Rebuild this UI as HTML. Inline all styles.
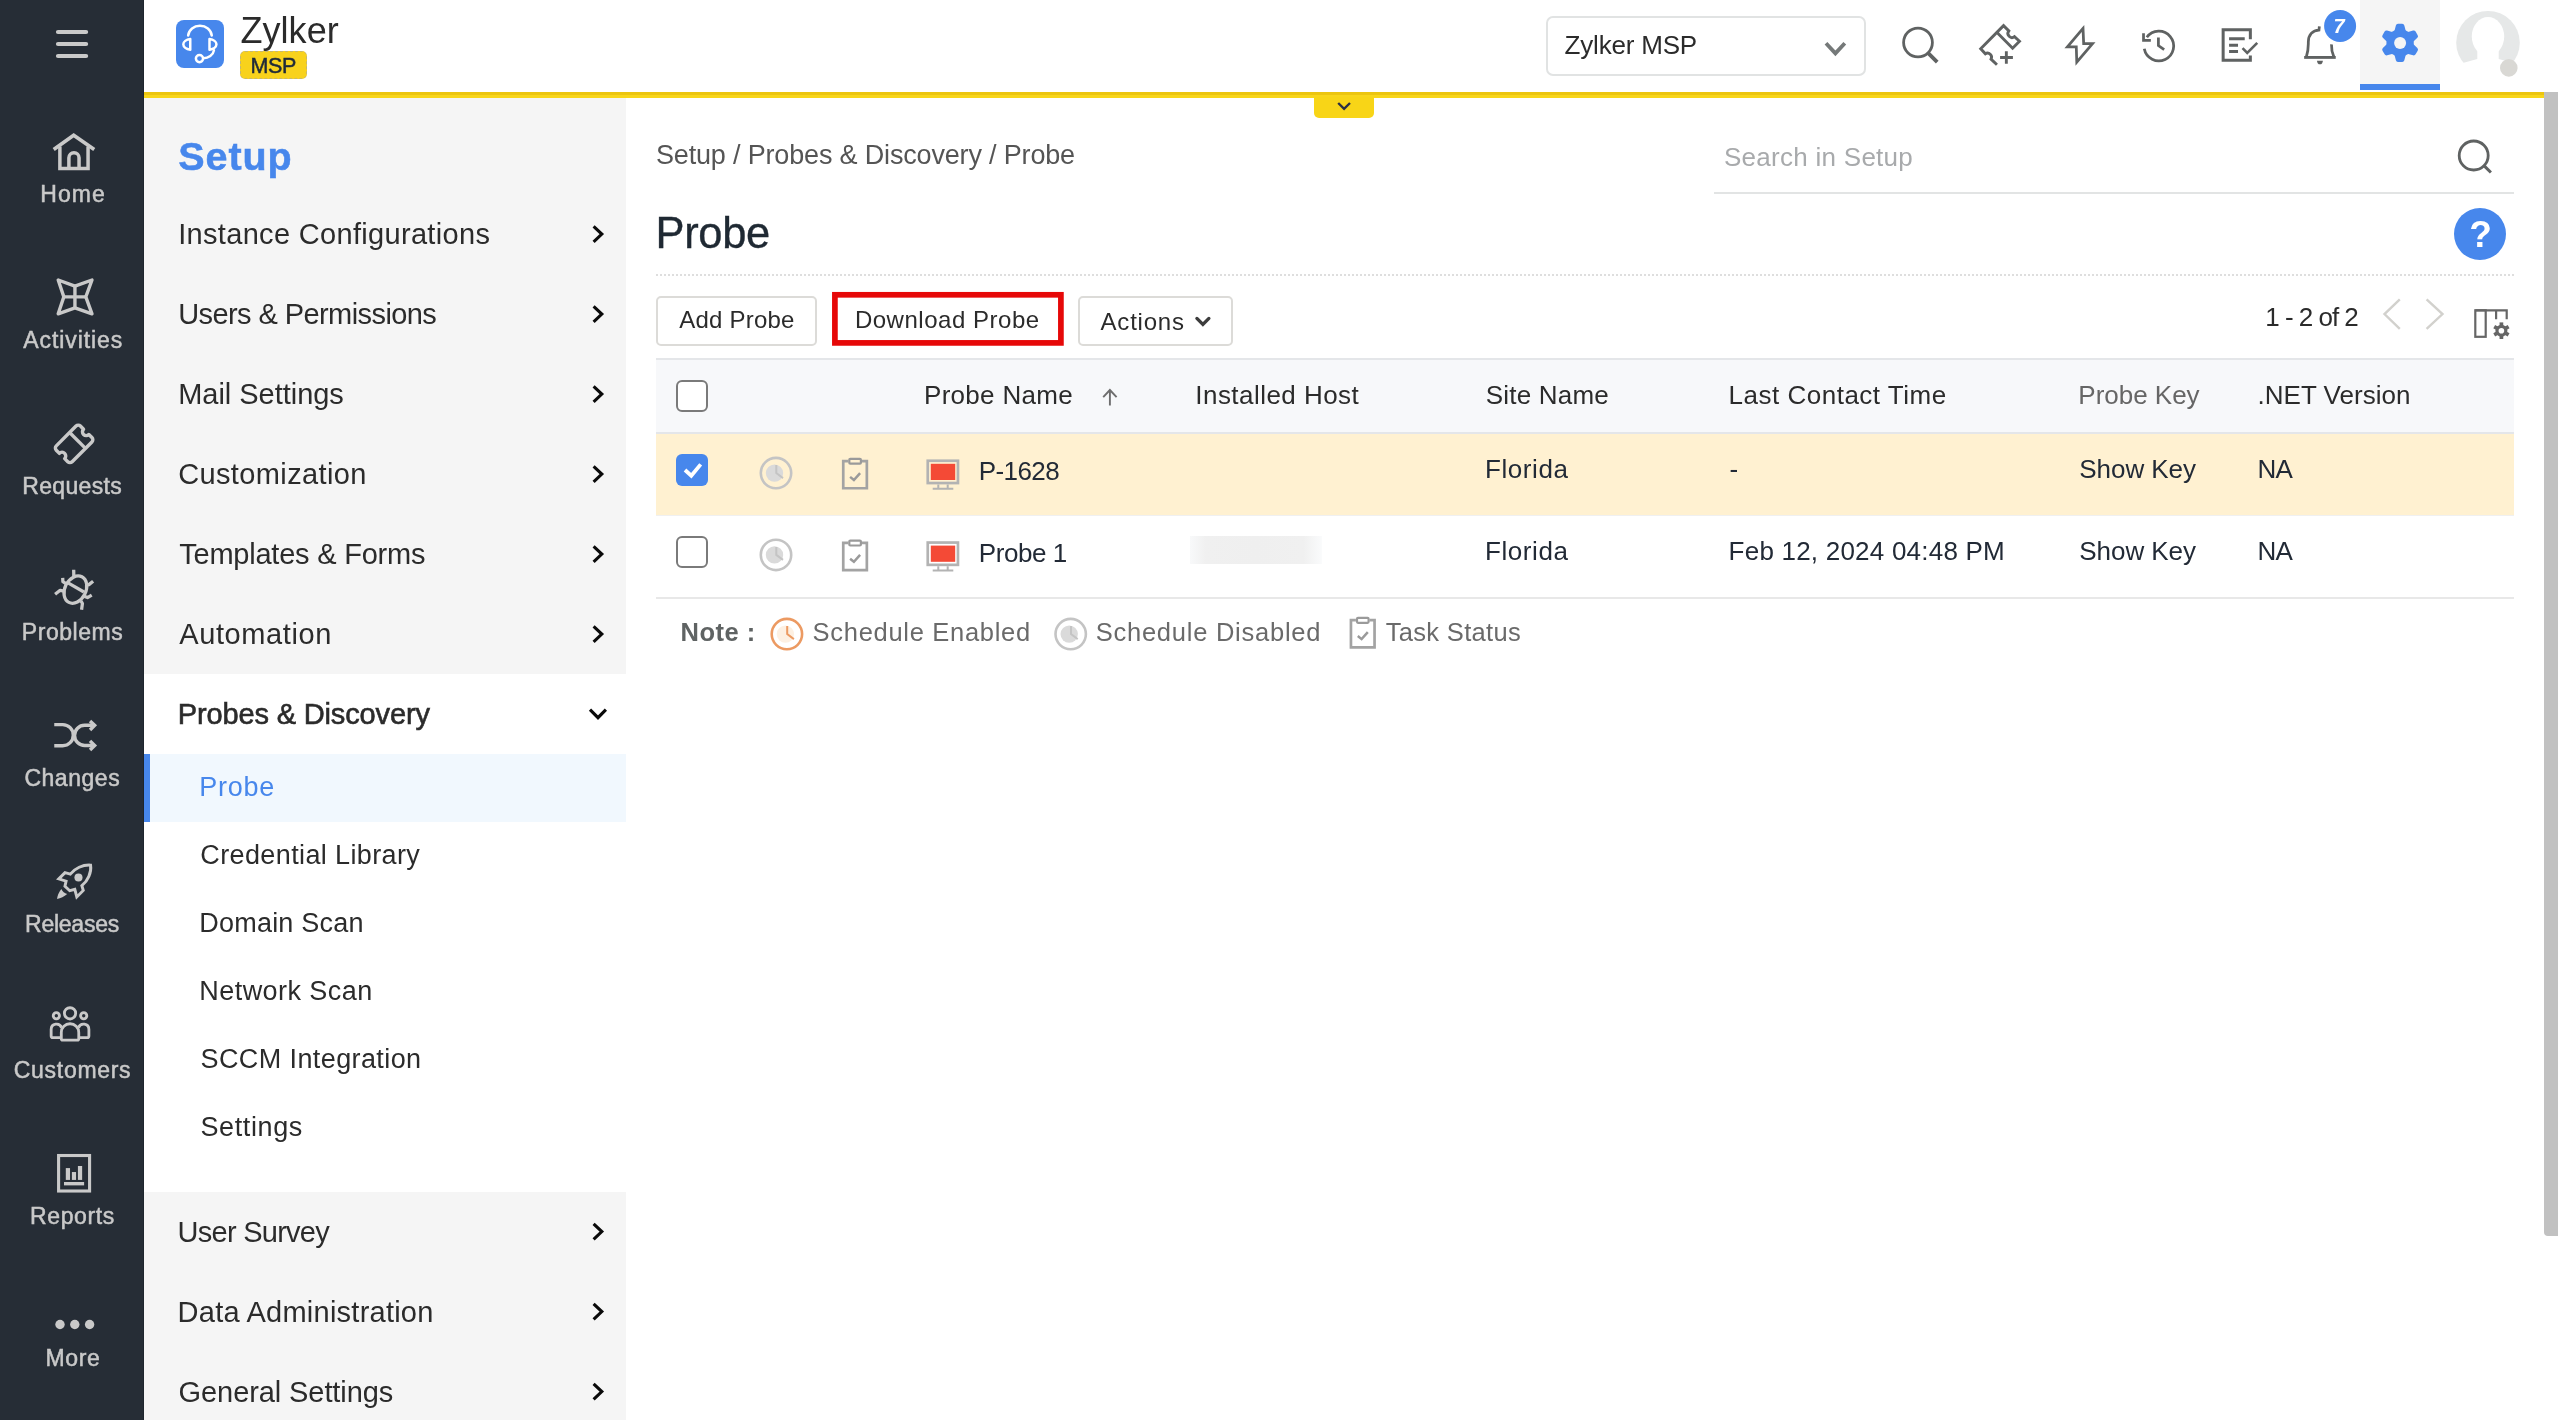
<!DOCTYPE html>
<html lang="en">
<head>
<meta charset="utf-8">
<title>Probe - Setup</title>
<style>
html,body{margin:0;padding:0;}
body{width:2558px;height:1420px;overflow:hidden;position:relative;background:#ffffff;font-family:"Liberation Sans",sans-serif;}
div,span{box-sizing:border-box;}
.abs{position:absolute;}
.t{position:absolute;white-space:pre;line-height:1;font-family:"Liberation Sans",sans-serif;}
#nav{position:absolute;left:0;top:0;width:144px;height:1420px;background:#262d36;border-right:1px solid #1e252d;}
#header{position:absolute;left:144px;top:0;width:2414px;height:92px;background:#ffffff;}
#ybar{position:absolute;left:144px;top:92px;width:2400px;height:6px;background:linear-gradient(#ecc510 0,#ecc510 50%,#f8d61a 50%,#f8d61a 100%);}
#ytab{position:absolute;left:1314px;top:97px;width:60px;height:21px;background:#f8d517;border-radius:0 0 5px 5px;}
#setup{position:absolute;left:144px;top:98px;width:482px;height:1322px;background:#f5f5f5;}
#setup .open{position:absolute;left:0;top:576px;width:482px;height:518px;background:#ffffff;}
#setup .sel{position:absolute;left:0;top:656px;width:482px;height:68px;background:#f1f8fe;border-left:6px solid #4787ec;}
#main{position:absolute;left:626px;top:98px;width:1918px;height:1322px;background:#ffffff;}
#scroll{position:absolute;left:2544px;top:92px;width:14px;height:1144px;background:#c1c1c1;border-radius:0 0 0 4px;}
.selbox{position:absolute;left:1546px;top:16px;width:320px;height:60px;border:2px solid #e1e3e3;border-radius:7px;background:#fff;}
.gearbg{position:absolute;left:2360px;top:0;width:80px;height:84px;background:#f5f5f5;}
.gearbar{position:absolute;left:2360px;top:84px;width:80px;height:6px;background:#4787ec;}
.logo{position:absolute;left:176px;top:20px;width:48px;height:48px;border-radius:8px;background:#4787ec;}
.msp{position:absolute;left:240px;top:51px;width:67px;height:28px;border-radius:5px;background:#f8d21c;border:1px dashed #c9b86a;}
.btn{position:absolute;top:296px;height:50px;border:2px solid #dcdbd8;border-radius:5px;background:#fff;}
.btnred{position:absolute;left:832px;top:292px;width:232px;height:54px;background:#fff;}
.sline{position:absolute;left:1714px;top:192px;width:800px;height:2px;background:#e2e4e4;}
.dotline{position:absolute;left:656px;top:274px;width:1858px;height:0;border-top:2px dotted #dedede;}
.help{position:absolute;left:2454px;top:208px;width:52.2px;height:52.2px;border-radius:50%;background:#4787ec;}
.thead{position:absolute;left:656px;top:358px;width:1858px;height:76px;background:#f7f8fa;border-top:2px solid #e4e6e9;border-bottom:2px solid #e4e6e9;}
.row1{position:absolute;left:656px;top:434px;width:1858px;height:81px;background:#fff1d1;}
.row2{position:absolute;left:656px;top:515px;width:1858px;height:84px;background:#ffffff;border-top:1px solid #f0f0f0;border-bottom:2px solid #e8e8e8;}
.cb{position:absolute;left:676px;width:32px;height:32px;border:2px solid #7a7a7a;border-radius:6px;background:#fff;}
.cbon{position:absolute;left:676px;top:454px;width:32px;height:32px;border-radius:6px;background:#4787ec;}
.blur{position:absolute;left:1190px;top:536px;width:132px;height:28px;background:linear-gradient(to right,#f8f9fa 0,#f0f0f0 12%,#efefef 50%,#f0f0f0 86%,#fafbfc 100%);}
</style>
</head>
<body>
<div id="nav"></div>
<div id="header">
</div>
<div class="logo"></div>
<div class="msp"></div>
<div class="selbox"></div>
<div class="gearbg"></div><div class="gearbar"></div>
<div id="setup"><div class="open"></div><div class="sel"></div></div>
<div id="main"></div>
<div id="ybar"></div>
<div id="ytab"></div>
<div id="scroll"></div>
<div class="sline"></div>
<div class="dotline"></div>
<div class="help"></div>
<div class="btn" style="left:656px;width:161px;"></div>
<div class="btnred"></div>
<div class="btn" style="left:1078px;width:155px;"></div>
<div class="thead"></div>
<div class="row1"></div>
<div class="row2"></div>
<div class="cb" style="top:380px;"></div>
<div class="cbon"></div>
<div class="cb" style="top:536px;"></div>
<div class="blur"></div>
<svg class="abs" style="left:0;top:0;" width="2558" height="1420" viewBox="0 0 2558 1420" fill="none">
<defs>
  <g id="clk">
    <circle cx="0" cy="0" r="15.2" stroke-width="2.6"/>
    <circle cx="-1.5" cy="0" r="8.7" style="fill:var(--cf)" stroke="none"/>
    <path d="M0.3,-8 V0 L7,5" stroke-width="2"/>
  </g>
  <g id="clip" stroke="#a3a3a3">
    <path d="M6.3,3.35 H1.35 V30.55 H24.95 V3.35 H20" stroke-width="2.7"/>
    <rect x="7.4" y="1.1" width="11.6" height="4.9" rx="1" stroke-width="2.2" stroke="#9a9a9a"/>
    <path d="M8.2,19.2 L12,22.3 L18.2,15.4" stroke-width="2.5" stroke="#9a9a9a"/>
  </g>
  <g id="mon">
    <rect x="1.35" y="1.35" width="30.2" height="22.3" stroke="#b3b3b3" stroke-width="2.7" fill="none"/>
    <rect x="4.4" y="4.4" width="24.4" height="16.2" fill="#f44a36"/>
    <path d="M11.9,25 V29 M21.3,25 V29 M6.3,29.4 H26.9" stroke="#b3b3b3" stroke-width="2"/>
  </g>
  <path id="chevR" d="M-4.1,-7.7 L4.1,0 L-4.1,7.7" stroke="#0a0a0a" stroke-width="3.1"/>
</defs>

<!-- ===== left nav icons ===== -->
<g stroke="#c9c9c9" stroke-width="60" stroke-linejoin="round">
  <g stroke-width="4.2" stroke-linecap="round"><path d="M58,32 H86.1 M58,44 H86.1 M58,56 H86.1"/></g>
  <!-- home -->
  <g transform="translate(32,120) scale(0.05634)" stroke-linejoin="miter">
    <path d="M385,525 L740,270 L1105,525" stroke-width="64"/>
    <path d="M495,470 V860 H995 V470" stroke-width="62"/>
    <path d="M655,860 V670 A90,90 0 0 1 835,670 V860" stroke-width="62"/>
  </g>
  <!-- activities -->
  <g transform="translate(32,260) scale(0.05634)">
    <path d="M465,355 L762,465 L1065,355 L955,655 L1065,955 L762,850 L465,955 L565,655 Z"/>
    <path d="M762,465 V850 M565,655 H955"/>
  </g>
  <!-- requests (ticket) -->
  <g transform="translate(74.1,443.9) rotate(-45) scale(1.035)" stroke-width="3.3">
    <path d="M-13.5,-10.85 H13.5 a3,3 0 0 1 3,3 V-3.6 a3.6,3.6 0 0 0 0,7.2 V7.85 a3,3 0 0 1 -3,3 H-13.5 a3,3 0 0 1 -3,-3 V3.6 a3.6,3.6 0 0 0 0,-7.2 V-7.85 a3,3 0 0 1 3,-3 Z"/>
    <path d="M4.7,-10.85 V10.85"/>
  </g>
  <!-- problems (bug) -->
  <g transform="translate(32,550) scale(0.05634)" stroke-width="58">
    <ellipse cx="770" cy="703" rx="186" ry="255" transform="rotate(27 770 703)"/>
    <path d="M632,580 L922,745"/>
    <path d="M740,350 L742,470"/>
    <path d="M545,495 L548,560 L610,600"/>
    <path d="M410,785 L500,715 L570,730"/>
    <path d="M1085,555 L1010,615 L965,625"/>
    <path d="M1060,800 L985,845 L925,820"/>
    <path d="M880,1060 L895,950 L870,905"/>
  </g>
  <!-- changes (shuffle) -->
  <g transform="translate(32,695) scale(0.05634)" stroke-linejoin="miter">
    <path d="M395,525 H545 A187.5,187.5 0 0 1 545,900 H395"/>
    <path d="M1100,538 H935 A179,179 0 0 0 935,896 H1100"/>
    <path d="M1030,460 L1112,538 L1030,620"/>
    <path d="M1030,815 L1112,896 L1030,975"/>
  </g>
  <!-- releases (rocket) -->
  <g transform="translate(32,842) scale(0.05634)" stroke-width="52" stroke-linejoin="miter">
    <path d="M1040,410 C900,400 760,470 680,570 L585,545 L475,655 L605,695 L585,785 L670,865 L760,840 L795,975 L910,860 L885,775 C990,690 1060,540 1040,410 Z"/>
    <circle cx="825" cy="630" r="72" fill="#c9c9c9" stroke="none"/>
    <path d="M520,835 C470,900 450,960 445,1010 C510,1000 570,975 625,925 C580,910 540,880 520,835 Z" fill="#c9c9c9" stroke="none"/>
  </g>
  <!-- customers -->
  <g transform="translate(32,988) scale(0.05634)" stroke-width="50">
    <circle cx="675" cy="450" r="100"/>
    <circle cx="432" cy="492" r="55"/>
    <circle cx="918" cy="492" r="55"/>
    <path d="M520,900 V790 A155,155 0 0 1 830,790 V900 Q830,925 805,925 H545 Q520,925 520,900 Z"/>
    <path d="M500,880 H370 Q340,880 340,850 V735 A95,95 0 0 1 525,705"/>
    <path d="M850,880 H980 Q1010,880 1010,850 V735 A95,95 0 0 0 825,705"/>
  </g>
  <!-- reports -->
  <g transform="translate(32,1134) scale(0.05634)" stroke-linejoin="miter">
    <rect x="472" y="382" width="550" height="630" stroke-width="55"/>
    <g fill="#c9c9c9" stroke="none">
      <rect x="600" y="605" width="75" height="210"/>
      <rect x="708" y="675" width="74" height="140"/>
      <rect x="815" y="568" width="75" height="247"/>
      <rect x="568" y="852" width="357" height="60"/>
    </g>
  </g>
  <!-- more -->
  <g fill="#c9c9c9" stroke="none"><circle cx="60" cy="1324.5" r="4.7"/><circle cx="74.8" cy="1324.5" r="4.7"/><circle cx="89.6" cy="1324.5" r="4.7"/></g>
</g>

<!-- ===== logo headset ===== -->
<g transform="translate(160,5) scale(0.07819)" stroke="#ffffff" stroke-width="32" stroke-linecap="round" stroke-linejoin="round">
  <path d="M360,390 A152,140 0 0 1 662,390"/>
  <path d="M387,435 V572 A112,70 0 0 1 387,435 Z"/>
  <path d="M633,435 V572 A112,70 0 0 0 633,435 Z"/>
  <path d="M690,580 C680,640 620,680 555,682"/>
  <circle cx="505" cy="685" r="46"/>
</g>

<!-- ===== setup chevrons ===== -->
<g>
  <use href="#chevR" x="597.7" y="234.1"/><use href="#chevR" x="597.7" y="314.1"/><use href="#chevR" x="597.7" y="394.1"/>
  <use href="#chevR" x="597.7" y="474.1"/><use href="#chevR" x="597.7" y="554.1"/><use href="#chevR" x="597.7" y="634.1"/>
  <use href="#chevR" x="597.7" y="1231.6"/><use href="#chevR" x="597.7" y="1311.6"/><use href="#chevR" x="597.7" y="1391.6"/>
  <path d="M590,709.6 L598,717.7 L605.9,709.6" stroke="#0a0a0a" stroke-width="3.1"/>
</g>

<!-- ===== header icons ===== -->
<g stroke="#5f6262">
  <path d="M1826,43.2 L1835.4,53.4 L1844.8,43.2" stroke="#757979" stroke-width="3.8"/>
  <circle cx="1918" cy="42.5" r="14.4" stroke-width="2.8"/>
  <path d="M1928.2,53.2 L1937.2,62.2" stroke-width="3.8"/>
  <!-- ticket + -->
  <g transform="translate(1890,5) scale(0.06255)" stroke-width="46">
    <path d="M1710,955 L1615,865 A64,64 0 0 0 1525,780 L1450,700 L1815,330 L1900,415 A64,64 0 0 0 1990,505 L2070,580 L1960,690 L1715,445"/>
    <path d="M1760,840 H1965 M1860,740 V940"/>
  </g>
  <!-- lightning + history -->
  <g transform="translate(2040,5) scale(0.06255)" stroke-width="44">
    <path d="M688,375 L438,668 L580,668 L588,915 L840,618 L698,618 Z"/>
    <path d="M1708,516 A237,237 0 1 1 1667,700"/>
    <path d="M1655,452 V567 H1772"/>
    <path d="M1893,520 V650 L1985,715"/>
  </g>
  <!-- checklist + bell -->
  <g transform="translate(2200,5) scale(0.06255)" stroke-width="48">
    <path d="M805,548 V395 H370 V885 H805 V808"/>
    <path d="M465,540 H715 M465,645 H608 M465,745 H608"/>
    <path d="M680,690 L755,765 L915,605" stroke-width="42"/>
    <path d="M1665,838 H2170" stroke-width="46"/>
    <path d="M1700,830 C1740,700 1730,640 1732,590 C1732,480 1800,402 1902,400 L1908,340" stroke-width="44"/>
    <path d="M2102,630 C2100,700 2110,760 2140,830" stroke-width="44"/>
    <path d="M1870,890 H1965 A48,68 0 0 1 1870,890 Z" fill="#5f6262" stroke="none"/>
  </g>
</g>
<circle cx="2340.1" cy="26" r="16" fill="#4787ec"/>
<!-- gear -->
<g transform="translate(2400.1,42.9)">
  <circle r="13.7" fill="#4787ec"/>
  <g fill="#4787ec" stroke="#4787ec" stroke-width="4.4" stroke-linejoin="round"><path d="M-2.1,-16.9 H2.1 L3.6,-11 H-3.6 Z"/><path d="M-2.1,-16.9 H2.1 L3.6,-11 H-3.6 Z" transform="rotate(60)"/><path d="M-2.1,-16.9 H2.1 L3.6,-11 H-3.6 Z" transform="rotate(120)"/><path d="M-2.1,-16.9 H2.1 L3.6,-11 H-3.6 Z" transform="rotate(180)"/><path d="M-2.1,-16.9 H2.1 L3.6,-11 H-3.6 Z" transform="rotate(240)"/><path d="M-2.1,-16.9 H2.1 L3.6,-11 H-3.6 Z" transform="rotate(300)"/></g>
  <circle r="6" fill="#f5f5f5"/>
</g>
<!-- avatar -->
<g>
  <circle cx="2488" cy="42.7" r="31.8" fill="#e6e8e8"/>
  <ellipse cx="2488" cy="36.5" rx="16.2" ry="19.6" fill="#ffffff"/>
  <path d="M2477.3,50 V59 L2461,63.6 L2450,80 H2526 L2515,63.6 L2498.7,59 V50 Z" fill="#ffffff"/>
  <circle cx="2508.8" cy="67.9" r="8.8" fill="#d9d8d4"/>
</g>
<!-- yellow tab chevron -->
<path d="M1338.2,103 L1344.1,108.8 L1350,103" stroke="#2a2f45" stroke-width="2.4"/>

<!-- ===== main icons ===== -->
<rect x="834.9" y="294.8" width="226" height="48.1" stroke="#e60808" stroke-width="5.7"/>
<g stroke="#5f6262">
  <circle cx="2473.7" cy="155.5" r="14.5" stroke-width="2.8"/>
  <path d="M2484,165.6 L2490.9,172.5" stroke-width="3"/>
</g>
<path d="M1103.2,397.2 L1109.9,390 L1116.6,397.2 M1109.9,390.4 V405.6" stroke="#6e6e6e" stroke-width="1.9"/>
<path d="M1196.9,318.4 L1202.9,324.5 L1208.9,318.4" stroke="#3d3d3d" stroke-width="3.3" stroke-linecap="round"/>
<path d="M2399.8,299.3 L2384.5,314.1 L2399.8,328.9" stroke="#d2d1cd" stroke-width="2.4"/>
<path d="M2426.6,299.3 L2442.5,314.1 L2426.6,328.9" stroke="#d2d1cd" stroke-width="2.4"/>
<!-- columns settings -->
<g stroke="#666" stroke-width="2.2">
  <path d="M2475.3,310.3 H2506.7 V319.2 M2496.1,310.3 V319.2"/>
  <rect x="2475.3" y="310.3" width="10.4" height="26.5"/>
</g>
<g transform="translate(2501.4,330.7)">
  <circle r="6" fill="#666"/>
  <g stroke="#666" stroke-width="3.7">
    <path d="M0,-8.3 V8.3"/><path d="M0,-8.3 V8.3" transform="rotate(60)"/><path d="M0,-8.3 V8.3" transform="rotate(120)"/>
  </g>
  <circle r="2.8" fill="#ffffff"/>
</g>
<!-- checked mark -->
<path d="M685,470 L691.3,475.7 L700.7,464.4" stroke="#ffffff" stroke-width="3.8"/>
<!-- clocks -->
<g style="--cf:#dadada" stroke="#c4c4c4"><use href="#clk" x="776" y="473.1"/><use href="#clk" x="776" y="554.9"/><use href="#clk" x="1070.7" y="634.1"/></g>
<g style="--cf:#fdf0e2" stroke="#ec9a62"><use href="#clk" x="786.9" y="634.1"/></g>
<!-- clipboards -->
<use href="#clip" x="841.9" y="457.7"/><use href="#clip" x="841.9" y="539.5"/><use href="#clip" x="1349.6" y="616.8"/>
<!-- monitors -->
<use href="#mon" x="926.4" y="459.4"/><use href="#mon" x="926.4" y="541.2"/>
</svg>

<div id="txt" style="position:absolute;left:0;top:0;width:2558px;height:1420px;will-change:transform;">
<span class="t" style="left:40.3px;top:183px;font-size:23px;color:#c9c9c9;letter-spacing:1.05px;-webkit-text-stroke:0.5px #c9c9c9;">Home</span>
<span class="t" style="left:23.3px;top:329px;font-size:23px;color:#c9c9c9;letter-spacing:0.91px;-webkit-text-stroke:0.5px #c9c9c9;">Activities</span>
<span class="t" style="left:22.3px;top:475px;font-size:23px;color:#c9c9c9;letter-spacing:0.32px;-webkit-text-stroke:0.5px #c9c9c9;">Requests</span>
<span class="t" style="left:21.8px;top:621px;font-size:23px;color:#c9c9c9;letter-spacing:0.54px;-webkit-text-stroke:0.5px #c9c9c9;">Problems</span>
<span class="t" style="left:24.4px;top:767px;font-size:23px;color:#c9c9c9;letter-spacing:0.54px;-webkit-text-stroke:0.5px #c9c9c9;">Changes</span>
<span class="t" style="left:25.1px;top:913px;font-size:23px;color:#c9c9c9;letter-spacing:-0.26px;-webkit-text-stroke:0.5px #c9c9c9;">Releases</span>
<span class="t" style="left:13.8px;top:1059px;font-size:23px;color:#c9c9c9;letter-spacing:0.70px;-webkit-text-stroke:0.5px #c9c9c9;">Customers</span>
<span class="t" style="left:30.0px;top:1205px;font-size:23px;color:#c9c9c9;letter-spacing:0.64px;-webkit-text-stroke:0.5px #c9c9c9;">Reports</span>
<span class="t" style="left:45.4px;top:1347px;font-size:23px;color:#c9c9c9;letter-spacing:0.66px;-webkit-text-stroke:0.5px #c9c9c9;">More</span>
<span class="t" style="left:240.5px;top:13px;font-size:36px;color:#2b2b2b;letter-spacing:0.04px;">Zylker</span>
<span class="t" style="left:250.6px;top:56px;font-size:21.5px;color:#1f2a3a;letter-spacing:-0.42px;-webkit-text-stroke:0.5px #1f2a3a;">MSP</span>
<span class="t" style="left:1564.6px;top:32px;font-size:26px;color:#2b2b2b;letter-spacing:-0.20px;">Zylker MSP</span>
<span class="t" style="left:2333.5px;top:16px;font-size:20px;color:#ffffff;font-weight:700;font-style:italic;">7</span>
<span class="t" style="left:178.3px;top:137px;font-size:39.5px;color:#4787ec;letter-spacing:0.93px;font-weight:700;-webkit-text-stroke:0.5px #4787ec;">Setup</span>
<span class="t" style="left:178.2px;top:220px;font-size:29px;color:#2b2b2b;letter-spacing:0.32px;">Instance Configurations</span>
<span class="t" style="left:178.2px;top:300px;font-size:29px;color:#2b2b2b;letter-spacing:-0.58px;">Users &amp; Permissions</span>
<span class="t" style="left:178.2px;top:380px;font-size:29px;color:#2b2b2b;letter-spacing:-0.03px;">Mail Settings</span>
<span class="t" style="left:178.2px;top:460px;font-size:29px;color:#2b2b2b;letter-spacing:0.37px;">Customization</span>
<span class="t" style="left:179.2px;top:540px;font-size:29px;color:#2b2b2b;letter-spacing:-0.22px;">Templates &amp; Forms</span>
<span class="t" style="left:179.2px;top:620px;font-size:29px;color:#2b2b2b;letter-spacing:0.61px;">Automation</span>
<span class="t" style="left:177.8px;top:700px;font-size:29px;color:#2b2b2b;letter-spacing:-0.15px;-webkit-text-stroke:0.6px #2b2b2b;">Probes &amp; Discovery</span>
<span class="t" style="left:199.3px;top:774px;font-size:27px;color:#4787ec;letter-spacing:0.74px;">Probe</span>
<span class="t" style="left:200.3px;top:842px;font-size:27px;color:#2b2b2b;letter-spacing:0.38px;">Credential Library</span>
<span class="t" style="left:199.3px;top:910px;font-size:27px;color:#2b2b2b;letter-spacing:0.21px;">Domain Scan</span>
<span class="t" style="left:199.3px;top:978px;font-size:27px;color:#2b2b2b;letter-spacing:0.44px;">Network Scan</span>
<span class="t" style="left:200.5px;top:1046px;font-size:27px;color:#2b2b2b;letter-spacing:0.40px;">SCCM Integration</span>
<span class="t" style="left:200.5px;top:1114px;font-size:27px;color:#2b2b2b;letter-spacing:0.61px;">Settings</span>
<span class="t" style="left:177.6px;top:1218px;font-size:29px;color:#2b2b2b;letter-spacing:-0.74px;">User Survey</span>
<span class="t" style="left:177.6px;top:1298px;font-size:29px;color:#2b2b2b;letter-spacing:0.24px;">Data Administration</span>
<span class="t" style="left:178.6px;top:1378px;font-size:29px;color:#2b2b2b;letter-spacing:-0.09px;">General Settings</span>
<span class="t" style="left:656.0px;top:142px;font-size:27px;color:#555555;letter-spacing:-0.17px;">Setup / Probes &amp; Discovery / Probe</span>
<span class="t" style="left:1723.9px;top:144px;font-size:26px;color:#a8aaac;letter-spacing:0.28px;">Search in Setup</span>
<span class="t" style="left:655.5px;top:212px;font-size:43.5px;color:#1f2933;letter-spacing:-0.35px;-webkit-text-stroke:0.35px #1f2933;">Probe</span>
<span class="t" style="left:2469.2px;top:216px;font-size:37px;color:#ffffff;font-weight:700;">?</span>
<span class="t" style="left:679.2px;top:308px;font-size:24px;color:#2b2b2b;letter-spacing:0.22px;">Add Probe</span>
<span class="t" style="left:854.9px;top:308px;font-size:24px;color:#2b2b2b;letter-spacing:0.52px;">Download Probe</span>
<span class="t" style="left:1100.6px;top:310px;font-size:24px;color:#2b2b2b;letter-spacing:0.77px;">Actions</span>
<span class="t" style="left:2265.3px;top:304px;font-size:26px;color:#2b2b2b;letter-spacing:-1.01px;">1 - 2 of 2</span>
<span class="t" style="left:924.0px;top:382px;font-size:26px;color:#2b2b2b;letter-spacing:0.30px;">Probe Name</span>
<span class="t" style="left:1195.3px;top:382px;font-size:26px;color:#2b2b2b;letter-spacing:0.46px;">Installed Host</span>
<span class="t" style="left:1485.8px;top:382px;font-size:26px;color:#2b2b2b;letter-spacing:0.20px;">Site Name</span>
<span class="t" style="left:1728.6px;top:382px;font-size:26px;color:#2b2b2b;letter-spacing:0.50px;">Last Contact Time</span>
<span class="t" style="left:2078.3px;top:382px;font-size:26px;color:#666666;letter-spacing:-0.01px;">Probe Key</span>
<span class="t" style="left:2257.5px;top:382px;font-size:26px;color:#2b2b2b;letter-spacing:0.02px;">.NET Version</span>
<span class="t" style="left:978.8px;top:458px;font-size:26px;color:#222a36;letter-spacing:-0.60px;">P-1628</span>
<span class="t" style="left:1485.0px;top:456px;font-size:26px;color:#222a36;letter-spacing:0.58px;">Florida</span>
<span class="t" style="left:1729.6px;top:456px;font-size:26px;color:#222a36;">-</span>
<span class="t" style="left:2079.3px;top:456px;font-size:26px;color:#222a36;letter-spacing:-0.05px;">Show Key</span>
<span class="t" style="left:2257.5px;top:456px;font-size:26px;color:#222a36;letter-spacing:-0.68px;">NA</span>
<span class="t" style="left:978.8px;top:540px;font-size:26px;color:#222a36;letter-spacing:-0.45px;">Probe 1</span>
<span class="t" style="left:1485.0px;top:538px;font-size:26px;color:#222a36;letter-spacing:0.58px;">Florida</span>
<span class="t" style="left:1728.6px;top:538px;font-size:26px;color:#222a36;letter-spacing:0.22px;">Feb 12, 2024 04:48 PM</span>
<span class="t" style="left:2079.3px;top:538px;font-size:26px;color:#222a36;letter-spacing:-0.05px;">Show Key</span>
<span class="t" style="left:2257.5px;top:538px;font-size:26px;color:#222a36;letter-spacing:-0.68px;">NA</span>
<span class="t" style="left:680.5px;top:620px;font-size:25.5px;color:#5f6363;letter-spacing:0.49px;font-weight:700;">Note :</span>
<span class="t" style="left:812.6px;top:620px;font-size:25.5px;color:#6a6a6a;letter-spacing:0.70px;">Schedule Enabled</span>
<span class="t" style="left:1095.7px;top:620px;font-size:25.5px;color:#6a6a6a;letter-spacing:0.76px;">Schedule Disabled</span>
<span class="t" style="left:1385.7px;top:620px;font-size:25.5px;color:#6a6a6a;letter-spacing:0.32px;">Task Status</span>
</div>
</body>
</html>
